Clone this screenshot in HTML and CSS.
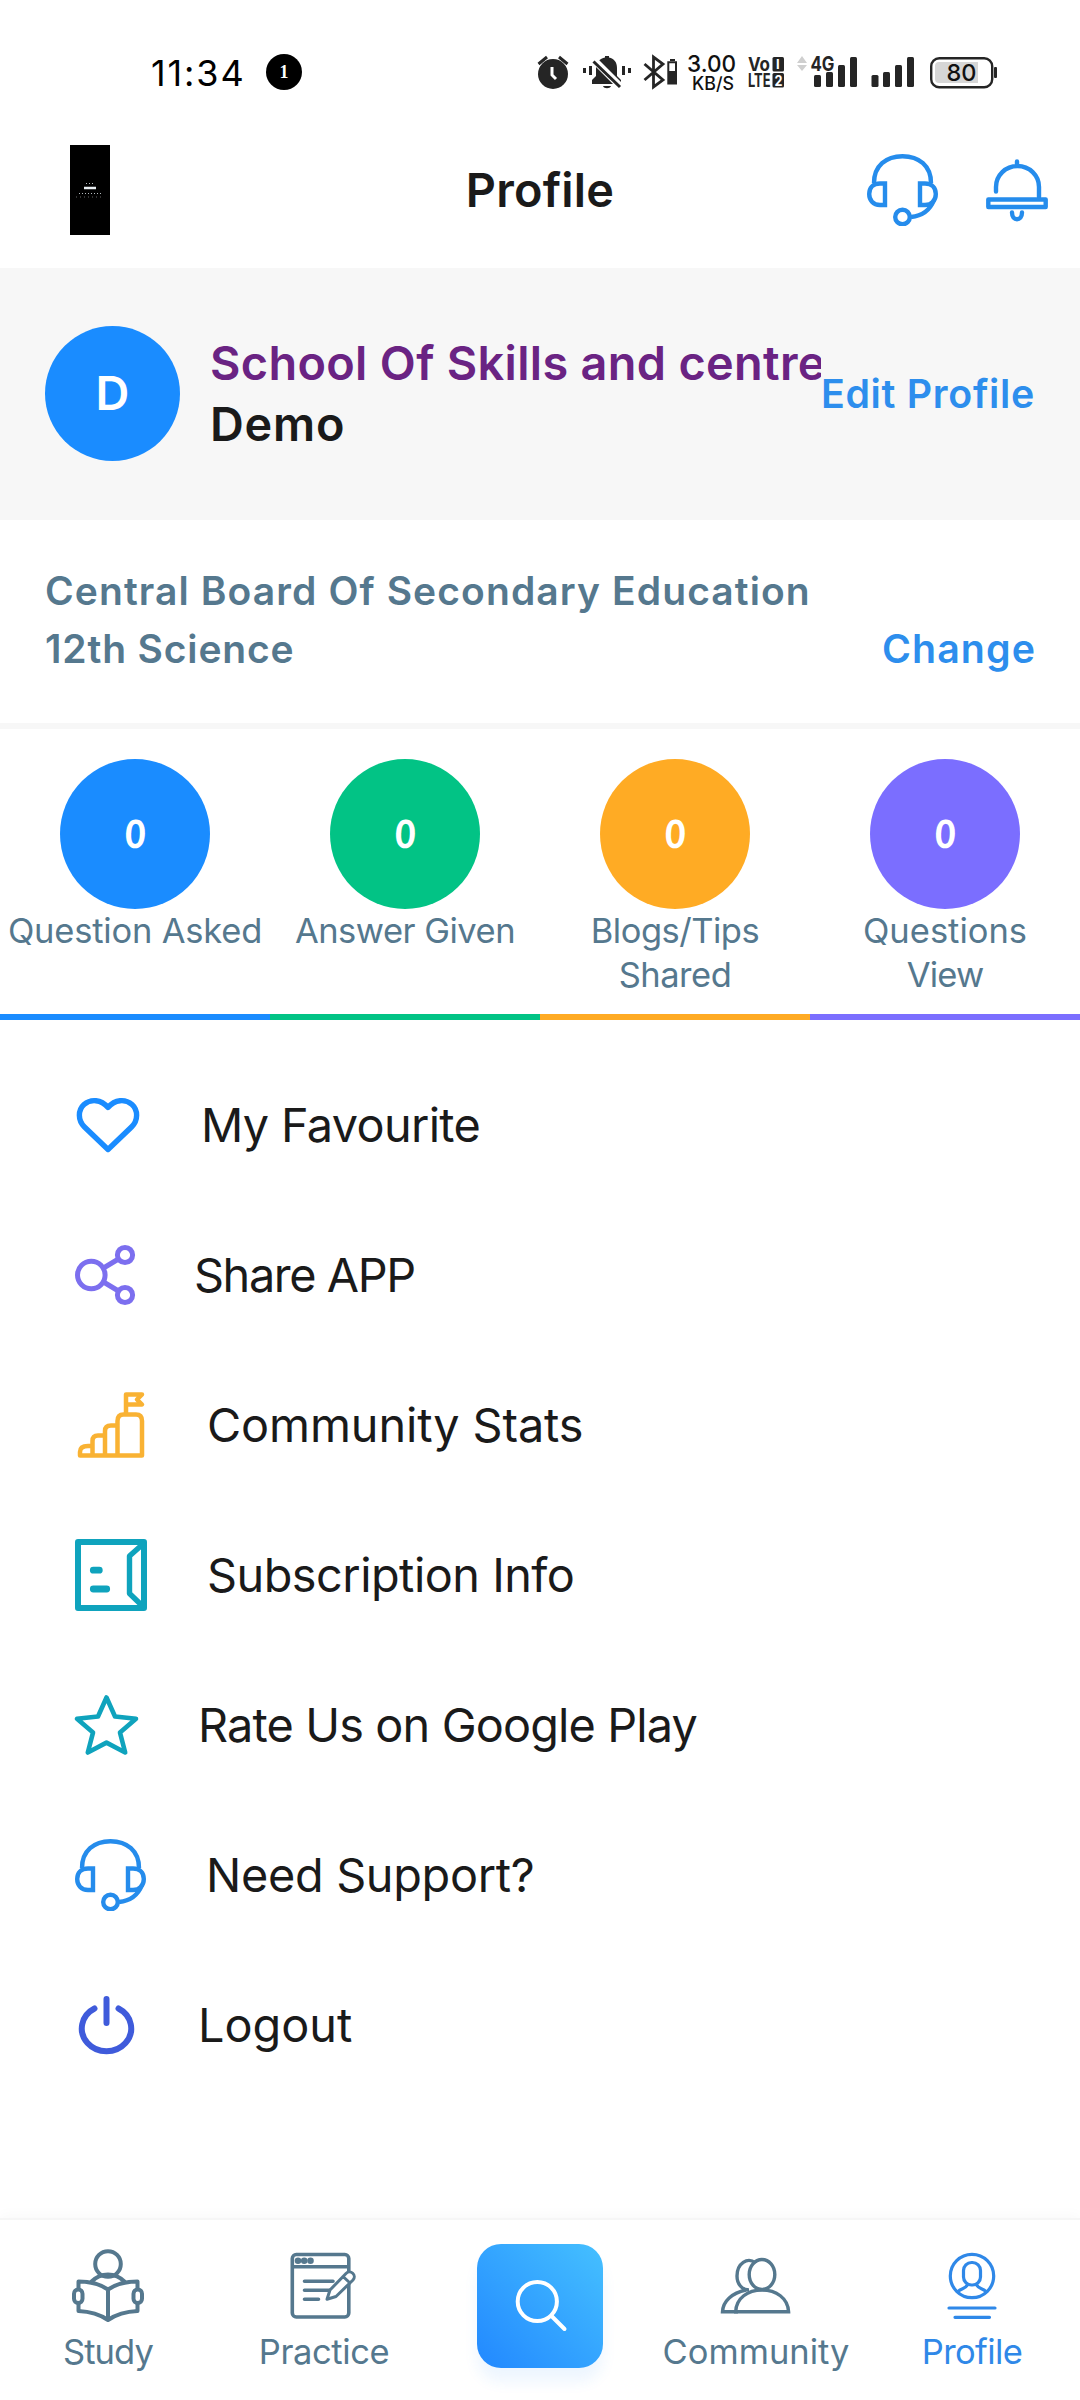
FILE: index.html
```html
<!DOCTYPE html>
<html lang="en">
<head>
<meta charset="utf-8">
<title>Profile</title>
<link rel="stylesheet" href="styles.css">
</head>
<body>
<svg class="defs" width="0" height="0">
  <symbol id="headset" viewBox="0 0 71 72">
    <g fill="none" stroke="currentColor" stroke-width="4.4">
      <path d="M7 29C7 12 19 2.2 35.5 2.2S64 12 64 29"/>
      <path d="M18 29.5V51H13C6 51 2.2 46 2.2 40S6 29.5 13 29.5Z"/>
      <path d="M53 29.5V51H58C65 51 68.8 46 68.8 40S65 29.5 58 29.5Z"/>
      <path d="M67 46C63 56 55 62 44 63"/>
      <circle cx="35.5" cy="63" r="7.3"/>
    </g>
  </symbol>
</svg>
<div class="screen">
  <header class="status">
    <div class="status-left">
      <span class="clock">11:34</span>
      <span class="badge">1</span>
    </div>
    <svg class="status-right" viewBox="536 50 464 44" width="464" height="44">
      <g fill="#252525">
        <circle cx="553" cy="74" r="15"/>
        <path d="M552 67V75L556 79" fill="none" stroke="#fff" stroke-width="3"/>
        <path d="M538.5 64L547 57M567.5 64L559 57" stroke="#252525" stroke-width="3"/>
        <path d="M592 84V80L596 76V68C596 62 600 58.5 605 57.5V56H609V57.5C614 58.5 617 62 617 68V76L621 80V84Z"/>
        <path d="M603 86H611C610 89 604 89 603 86Z"/>
        <path d="M594 60L621 87" stroke="#fff" stroke-width="7"/>
        <path d="M593.5 61.5L620 87" stroke="#252525" stroke-width="3"/>
        <path d="M584.5 68V73M590.5 66V75M623.5 66V75M629.5 68V73" stroke="#252525" stroke-width="3"/>
        <path d="M644.5 64L663 80L653.5 87V57L663 64L644.5 80" fill="none" stroke="#252525" stroke-width="2.8"/>
        <path d="M668.3 62.3H676V83.5H668.3Z" fill="none" stroke="#252525" stroke-width="2"/>
        <path d="M668 71H677V84H668ZM670 59H675V61H670Z"/>
        <rect x="772.5" y="57" width="11.5" height="14.5" rx="1.5"/>
        <rect x="772.5" y="73" width="11.5" height="14.5" rx="1.5"/>
        <rect x="814" y="75" width="7" height="12" rx="1.5"/>
        <rect x="826" y="72" width="7" height="15" rx="1.5"/>
        <rect x="838" y="65" width="7" height="22" rx="1.5"/>
        <rect x="850" y="57" width="7" height="30" rx="1.5"/>
        <rect x="871.5" y="75" width="7" height="12" rx="1.5"/>
        <rect x="883" y="72" width="7" height="15" rx="1.5"/>
        <rect x="895" y="65" width="7" height="22" rx="1.5"/>
        <rect x="907" y="57" width="7" height="30" rx="1.5"/>
        <rect x="994" y="67" width="3" height="11" rx="1"/>
      </g>
      <path d="M797 63L802 56L807 63ZM797 65L802 71L807 65Z" fill="#cfcfcf"/>
      <rect x="931.2" y="58.2" width="61" height="29" rx="8" fill="#fff" stroke="#252525" stroke-width="2.4"/>
      <path d="M939 62H978V83H939Q935 83 935 79V66Q935 62 939 62Z" fill="#d6d6d6"/>
      <g class="status-text">
        <text x="687" y="72" font-size="23.5" textLength="49" lengthAdjust="spacingAndGlyphs">3.00</text>
        <text x="692" y="90" font-size="18" textLength="42" lengthAdjust="spacingAndGlyphs">KB/S</text>
        <text x="748" y="71" font-size="19" textLength="22" lengthAdjust="spacingAndGlyphs" class="heavy">Vo</text>
        <text x="748" y="87" font-size="19" textLength="22.5" lengthAdjust="spacingAndGlyphs" class="heavy">LTE</text>
        <text x="776" y="69" font-size="13" class="heavy light">I</text>
        <text x="774.5" y="85.5" font-size="14" class="heavy light" textLength="8" lengthAdjust="spacingAndGlyphs">2</text>
        <text x="810.5" y="71" font-size="20" class="heavy" textLength="24" lengthAdjust="spacingAndGlyphs">4G</text>
        <text x="946.5" y="81" font-size="23.5" textLength="30" lengthAdjust="spacingAndGlyphs">80</text>
      </g>
    </svg>
  </header>

  <div class="appbar">
    <svg class="logo" viewBox="0 0 40 90" width="40" height="90">
      <rect width="40" height="90" fill="#000"/>
      <path d="M14 43H26" stroke="#e8eef2" stroke-width="2.5"/>
      <path d="M16 38.5H24M9 48.5H32" stroke="#b5bcc0" stroke-width="1" stroke-dasharray="1 2"/>
      <path d="M6 52H33" stroke="#666" stroke-width="1" stroke-dasharray="1 3"/>
    </svg>
    <h1 class="title">Profile</h1>
    <div class="actions">
      <svg width="71" height="72"><use href="#headset"/></svg>
      <svg viewBox="985 156 64 68" width="64" height="68" fill="none" stroke="currentColor" stroke-width="4.4" stroke-linecap="round" stroke-linejoin="round">
        <path d="M1017 161.5V166M996 191.5V187A21.5 21 0 0 1 1039 187V197"/>
        <path d="M988.3 199.5H1045.7V207H988.3Z"/>
        <path d="M1012 212.5C1012 221.5 1022 221.5 1022 212.5"/>
      </svg>
    </div>
  </div>

  <section class="user">
    <div class="avatar">D</div>
    <div class="names">
      <div class="school">School Of Skills and centre</div>
      <div class="name">Demo</div>
    </div>
    <a class="link edit">Edit Profile</a>
  </section>

  <section class="board">
    <div class="board-name">Central Board Of Secondary Education</div>
    <div class="board-row"><span class="grade">12th Science</span><a class="link change">Change</a></div>
  </section>

  <section class="stats">
    <div class="stat blue"><div class="count"><span>0</span></div><div class="label asked">Question Asked</div></div>
    <div class="stat green"><div class="count"><span>0</span></div><div class="label given">Answer Given</div></div>
    <div class="stat amber"><div class="count"><span>0</span></div><div class="label given">Blogs/Tips<br>Shared</div></div>
    <div class="stat violet"><div class="count"><span>0</span></div><div class="label">Questions<br><span class="view">View</span></div></div>
  </section>

  <nav class="menu">
    <a class="item favourite">
      <svg viewBox="75 1092 66 66" width="66" height="66" fill="none" stroke="#1a8cff" stroke-width="5.4" stroke-linejoin="round" stroke-linecap="round"><path d="M108 1149.5L84.5 1127C77.5 1120 78 1110 84 1104.5C91 1098.5 101 1099.5 108 1107.5C115 1099.5 125 1098.5 132 1104.5C138 1110 138.5 1120 131.5 1127Z"/></svg>
      <span>My Favourite</span>
    </a>
    <a class="item share">
      <svg viewBox="75 1242 66 66" width="66" height="66" fill="none" stroke="#7c6fef" stroke-width="5"><circle cx="91.3" cy="1275" r="13.8"/><circle cx="125" cy="1255" r="7.6"/><circle cx="125" cy="1295" r="7.6"/><path d="M103.5 1268L118.5 1259M103.5 1282L118.5 1291"/></svg>
      <span>Share APP</span>
    </a>
    <a class="item community">
      <svg viewBox="75 1389 72 72" width="72" height="72" fill="none" stroke="#f9b233" stroke-width="4.5" stroke-linejoin="round" stroke-linecap="round"><path d="M80 1455.5H142V1421C142 1416.5 140 1414.5 136 1414.5H123.5C119.500 1414.5 117.5 1417 117.5 1421V1455.5M117.5 1425.5H111C107 1425.5 105 1427.5 105 1431V1455.5M105 1435.5H98C94 1435.5 92.5 1438 92.5 1441V1455.5M92.5 1446H88C83 1446 80 1448 80 1452V1455.5M126 1414V1394.5H142L137 1399.5L142 1404.5H126"/></svg>
      <span>Community Stats</span>
    </a>
    <a class="item subscription">
      <svg viewBox="75 1539 72 72" width="72" height="72" fill="none" stroke="#0fa3bd" stroke-width="6" stroke-linejoin="round" stroke-linecap="round"><path d="M78 1542H144V1608H78Z"/><path stroke-width="5.4" d="M143 1544L129.5 1556V1593.5L143 1606.5"/><path stroke-width="6.8" d="M93.300 1570.2H99.300M93.300 1589H106.700"/></svg>
      <span>Subscription Info</span>
    </a>
    <a class="item rate">
      <svg viewBox="73 1692 66 66" width="66" height="66" fill="none" stroke="#0fa3bd" stroke-width="4.6" stroke-linejoin="round"><path d="M106.5 1697.5L115 1716.5L136 1718.8L120 1732.6L125.2 1752.5L106.5 1742.6L87.8 1752.5L93 1732.6L77 1718.8L98 1716.5Z"/></svg>
      <span>Rate Us on Google Play</span>
    </a>
    <a class="item support">
      <svg width="71" height="72"><use href="#headset"/></svg>
      <span>Need Support?</span>
    </a>
    <a class="item logout">
      <svg viewBox="76 1992 62 66" width="62" height="66" fill="none" stroke="#3f5bdb" stroke-width="6" stroke-linecap="round"><path d="M94.500 2008.500A24.700 22.800 0 1 0 118.500 2008.500M106.500 1999V2023"/></svg>
      <span>Logout</span>
    </a>
  </nav>

  <nav class="tabs">
    <a class="tab study">
      <svg viewBox="70 2248 76 76" width="76" height="76" fill="none" stroke="currentColor" stroke-width="4" stroke-linejoin="round"><circle cx="108" cy="2264" r="12.8"/><path d="M91 2282C97 2276 102 2274.5 108 2274.5S119 2276 125 2282"/><path d="M108 2289.5C100 2284 90 2281.5 78.5 2281.5V2311C90 2311.5 100 2314.5 108 2320C116 2314.5 126 2311.5 137.5 2311V2281.5C126 2281.5 116 2284 108 2289.5V2319"/><g fill="#fff"><rect x="74" y="2289.5" width="8.5" height="13.5" rx="4.2"/><rect x="133.5" y="2289.5" width="8.5" height="13.5" rx="4.2"/></g></svg>
      <span>Study</span>
    </a>
    <a class="tab practice">
      <svg viewBox="288 2248 76 76" width="76" height="76" fill="none" stroke="currentColor" stroke-width="3.6" stroke-linejoin="round" stroke-linecap="round"><rect x="294.3" y="2254.5" width="56.5" height="62.5" rx="4"/><path d="M295 2266.8H350M306.5 2281.3H335M306.5 2290.2H332M306.5 2299.3H320.5"/><g fill="currentColor" stroke="none"><circle cx="300" cy="2260.7" r="3.3"/><circle cx="306.2" cy="2260.7" r="3.3"/><circle cx="312.5" cy="2260.7" r="3.3"/></g><path fill="#fff" stroke-width="3" d="M329 2299.2L332 2290L348 2273.5A4.7 4.7 0 0 1 355 2280L338 2296.5ZM345 2276.5L352 2283"/></svg>
      <span>Practice</span>
    </a>
    <a class="tab-search">
      <svg viewBox="509 2275 62 62" width="62" height="62" fill="none" stroke="#fff" stroke-width="4" stroke-linecap="round"><circle cx="537.3" cy="2301.500" r="19.6"/><path d="M551.500 2316L564.500 2329"/></svg>
    </a>
    <a class="tab people">
      <svg viewBox="718 2248 76 76" width="76" height="76" fill="none" stroke="currentColor" stroke-width="3.4"><path d="M755.5 2263C747.5 2256.5 737 2263.5 737 2276C737 2284 742 2290 749 2290M746 2290C732 2293 723 2301 722.5 2311.8H738"/><ellipse cx="762" cy="2274.5" rx="12.8" ry="15"/><path d="M735.7 2311.8C736 2298 748 2290 762 2290S788 2298 788.6 2311.8Z"/></svg>
      <span>Community</span>
    </a>
    <a class="tab profile">
      <svg viewBox="934 2248 76 76" width="76" height="76" fill="none" stroke="currentColor" stroke-width="3.2" stroke-linecap="round"><circle cx="972" cy="2276" r="21.7"/><rect x="963.5" y="2262.5" width="17" height="22.5" rx="8"/><path d="M958 2291.5C961 2288 966 2289 967.5 2284.5M986 2291.5C983 2288 978 2289 976.5 2284.5M949 2308H995M955 2317.3H989.5"/></svg>
      <span>Profile</span>
    </a>
  </nav>
</div>
</body>
</html>
```
FILE: styles.css
```css
* { box-sizing: border-box; margin: 0; padding: 0; }

body {
  background: #fff;
  color: #1a1a1a;
  font-family: Inter, "Liberation Sans", sans-serif;
  font-feature-settings: "liga" 1;
}

svg { display: block; flex: none; }
.defs { height: 0; }

.screen {
  display: flex;
  flex-direction: column;
  width: 1080px;
  height: 2400px;
  overflow: hidden;
}

/* status bar */
.status {
  display: flex;
  align-items: flex-start;
  justify-content: space-between;
  height: 110px;
  padding: 50px 80px 0 151px;
  color: #000;
}
.status-left { display: flex; align-items: center; gap: 20px; height: 44px; }
.clock { font-size: 36px; line-height: 44px; letter-spacing: 1.9px; width: 95px; white-space: nowrap; margin-top: 2px; }
.badge {
  width: 36px;
  height: 36px;
  border-radius: 50%;
  background: #000;
  color: #fff;
  font: bold 18px/36px "Liberation Serif", serif;
  text-align: center;
}
.status-text { font-family: Inter, sans-serif; font-weight: 500; fill: #111; }
.status-text .heavy { font-weight: 700; fill: #252525; }
.status-text .light { fill: #fff; }

/* app bar */
.appbar {
  display: grid;
  grid-template-columns: 1fr auto 1fr;
  align-items: center;
  height: 158px;
  padding: 2px 31px 0 70px;
}
.title { font-size: 46.8px; font-weight: 600; line-height: 60px; letter-spacing: .2px; padding-right: 39px; }
.actions { display: flex; align-items: center; justify-content: flex-end; gap: 47px; color: #258cec; }

/* user card */
.user {
  display: flex;
  align-items: center;
  height: 252px;
  padding: 0 45px 1px;
  background: #f7f7f7;
}
.avatar {
  flex: none;
  width: 135px;
  height: 135px;
  border-radius: 50%;
  background: #1a8cff;
  color: #fff;
  font-size: 46.8px;
  font-weight: 600;
  line-height: 135px;
  text-align: center;
}
.names {
  width: 611px;
  margin-left: 30px;
  overflow: hidden;
  white-space: nowrap;
  font-size: 46.8px;
  font-weight: 600;
  line-height: 61px;
}
.school { color: #6a2383; letter-spacing: .35px; }
.name { letter-spacing: .8px; }
.link { color: #2d8eed; font-size: 39.3px; font-weight: 600; white-space: nowrap; }
.edit { margin-left: auto; letter-spacing: .7px; }

/* board */
.board {
  height: 209px;
  padding: 42px 45px 0;
  border-bottom: 6px solid #f7f7f7;
  color: #55788e;
  font-size: 39px;
  font-weight: 600;
  line-height: 58px;
}
.board-name { letter-spacing: 1.1px; }
.board-row { display: flex; justify-content: space-between; }
.grade { letter-spacing: .85px; }
.change { letter-spacing: 1.1px; margin-right: -1px; }

/* stats */
.stats { display: grid; grid-template-columns: repeat(4, 1fr); height: 291px; }
.stat {
  display: flex;
  flex-direction: column;
  align-items: center;
  padding-top: 30px;
  border-bottom: 6px solid var(--tone);
}
.blue { --tone: #1a8cff; }
.green { --tone: #02c385; }
.amber { --tone: #ffab24; }
.violet { --tone: #7b6eff; }
.count {
  width: 150px;
  height: 150px;
  border-radius: 50%;
  background: var(--tone);
  color: #fff;
  font: 900 39px/149px Lato, sans-serif;
  text-align: center;
}
.count span { display: inline-block; transform: scaleX(.9) skewX(-2deg); }
.label { color: #55788e; font-size: 34.5px; line-height: 44px; text-align: center; white-space: nowrap; }
.asked { letter-spacing: -.2px; }
.given { letter-spacing: -.5px; }
.view { letter-spacing: -.8px; }

/* menu */
.menu { display: flex; flex-direction: column; padding: 30px 0 0 75px; height: 1198px; }
.item { display: flex; align-items: center; height: 150px; font-size: 46.8px; white-space: nowrap; }
.favourite { gap: 60px; letter-spacing: -.65px; }
.share { gap: 53px; letter-spacing: -1.4px; }
.community { gap: 60px; letter-spacing: -.1px; }
.subscription { gap: 60px; letter-spacing: -.5px; }
.rate { gap: 59px; letter-spacing: -.85px; margin-left: -2px; }
.support { gap: 60px; letter-spacing: -.3px; }
.support svg { color: #258cec; }
.logout { gap: 60px; margin-left: 1px; }

/* bottom tabs */
.tabs {
  display: grid;
  grid-template-columns: repeat(5, 216px);
  height: 182px;
  border-top: 2px solid #f6f6f6;
  box-shadow: 0 -4px 12px rgba(0, 0, 0, .025);
  color: #55788e;
}
.tab { display: flex; flex-direction: column; align-items: center; gap: 8px; padding-top: 28px; font-size: 34.5px; line-height: 40px; }
.study { letter-spacing: -.9px; }
.practice { letter-spacing: -.4px; }
.profile { color: #2f88e8; letter-spacing: -.6px; }
.tab-search {
  display: flex;
  align-items: center;
  justify-content: center;
  justify-self: center;
  width: 126px;
  height: 124px;
  margin-top: 24px;
  border-radius: 24px;
  background: linear-gradient(45deg, #2288ff, #45c0ff);
  box-shadow: 0 14px 14px rgba(34, 136, 255, .08);
}
```
